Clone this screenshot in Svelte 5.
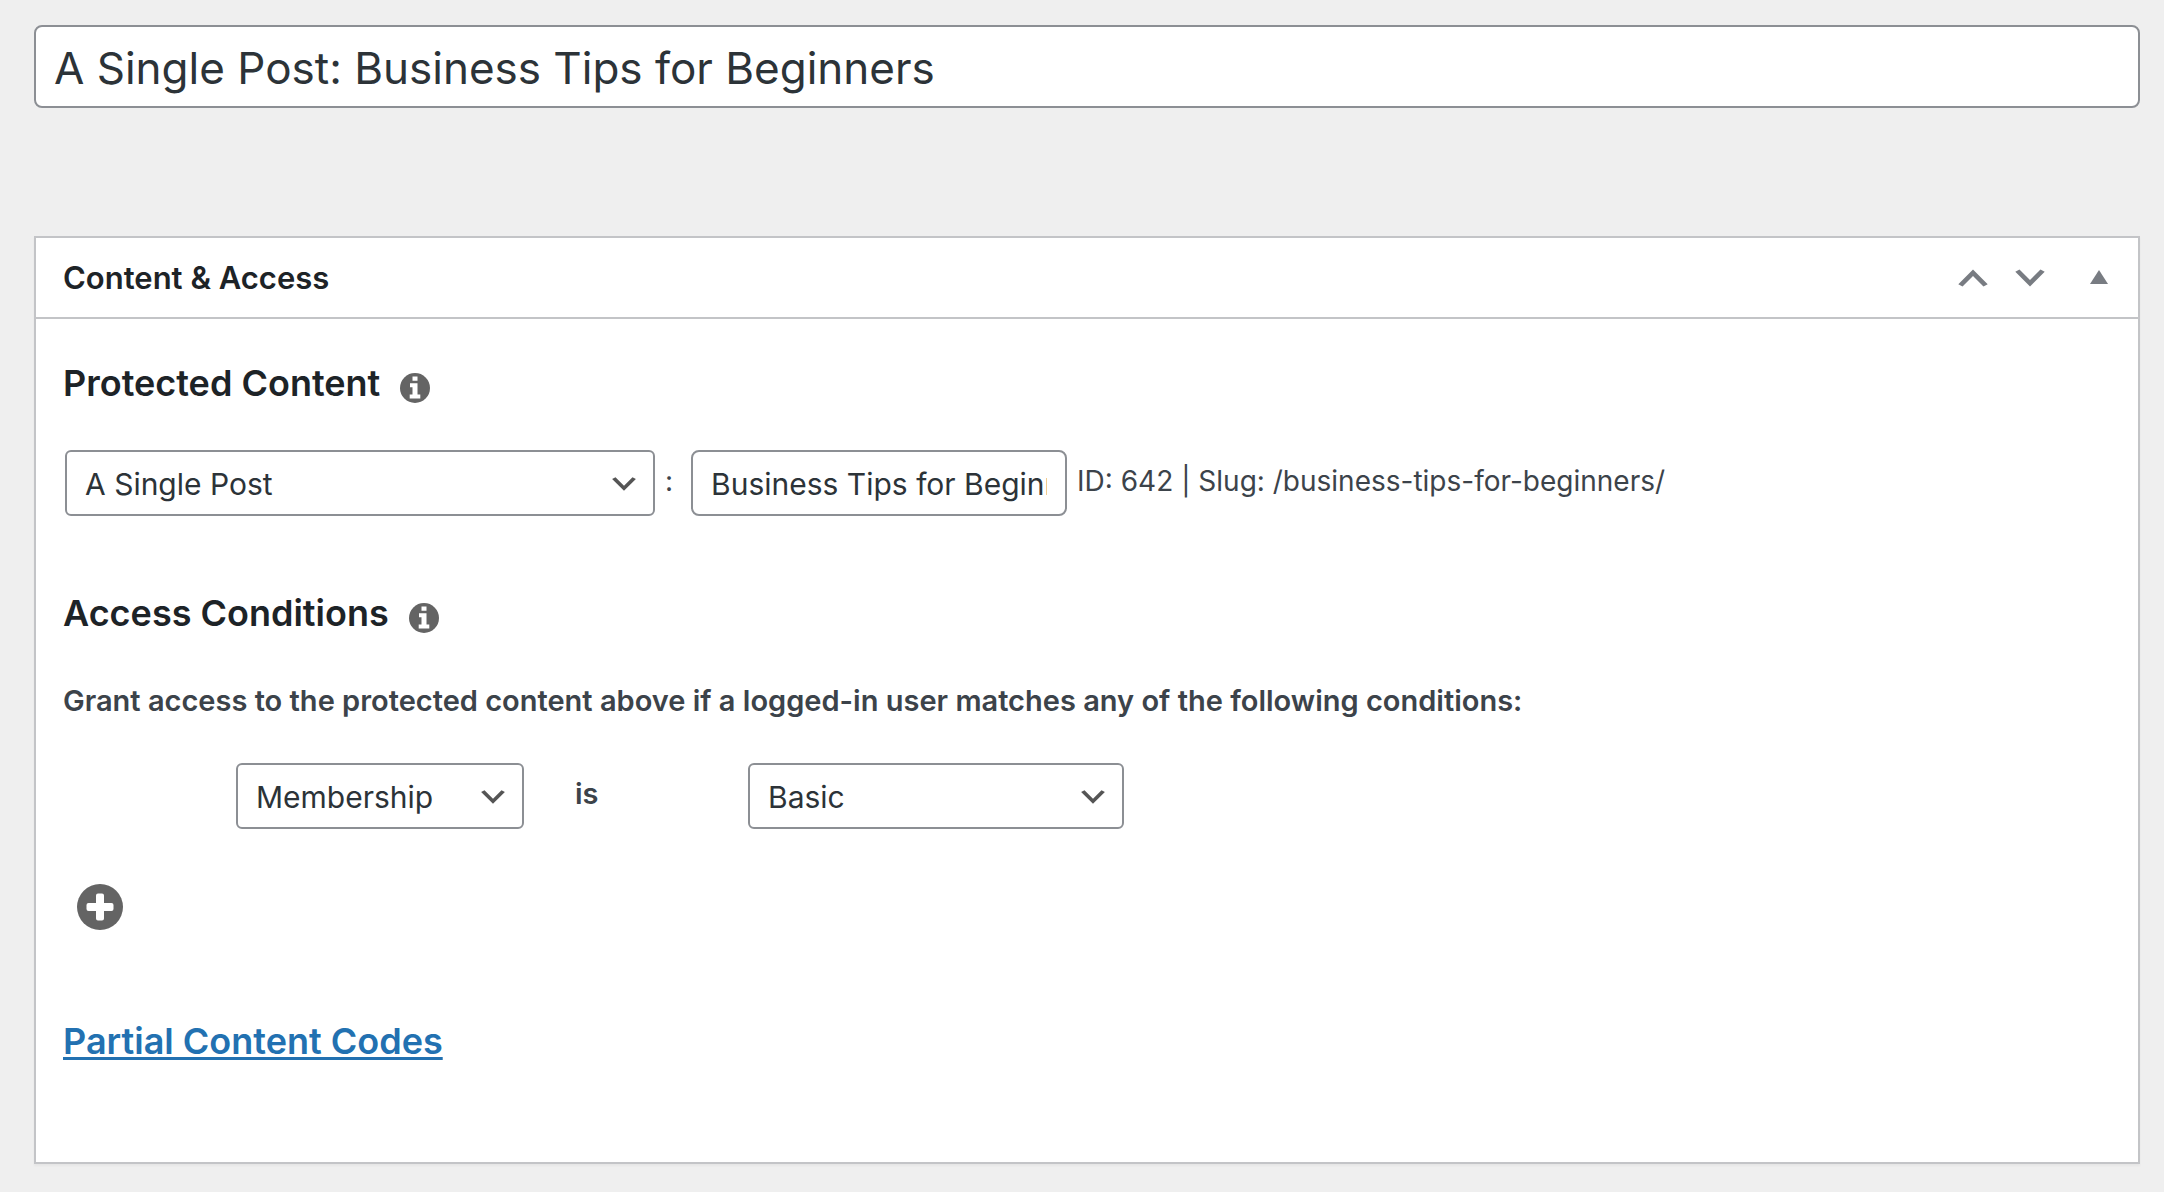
<script>
  let title = $state('A Single Post: Business Tips for Beginners');
  let scope = $state('A Single Post');
  let post = $state('Business Tips for Beginners');
  let conditionType = $state('Membership');
  let membership = $state('Basic');
</script>

{#snippet infoIcon()}
  <svg class="info-icon" viewBox="0 0 30 30" aria-hidden="true">
    <circle cx="15" cy="15" r="15" fill="#646464" />
    <path d="M12.500 3.500h5v4.200h-5zM10 10.200h7.500v11.300h2.800V25.500H9.700v-4h2.800v-7.300H10z" fill="#fff" />
  </svg>
{/snippet}

{#snippet dropdown(label, value, options, onchange)}
  <span class="dropdown">
    <select aria-label={label} {value} onchange={(e) => onchange(e.currentTarget.value)}>
      {#each options as option}
        <option value={option}>{option}</option>
      {/each}
    </select>
    <svg class="caret" viewBox="0 0 20 20" aria-hidden="true">
      <path d="M5 6l5 5 5-5 2 1-7 7-7-7 2-1z" fill="#555" />
    </svg>
  </span>
{/snippet}

<main class="page">
  <input class="title" type="text" aria-label="Title" bind:value={title} />

  <section class="box">
    <header class="box-header">
      <h2>Content &amp; Access</h2>
      <div class="actions">
        <button type="button" aria-label="Move up">
          <svg class="arrow" viewBox="0 0 20 20"><path d="M5 14l5-5 5 5 2-1-7-7-7 7 2 1z" /></svg>
        </button>
        <button type="button" aria-label="Move down">
          <svg class="arrow" viewBox="0 0 20 20"><path d="M5 6l5 5 5-5 2 1-7 7-7-7 2-1z" /></svg>
        </button>
        <button type="button" class="toggle" aria-label="Toggle panel">
          <svg class="triangle" viewBox="0 0 18 14"><path d="M9 0l9 14H0z" /></svg>
        </button>
      </div>
    </header>

    <div class="box-body">
      <h3>Protected Content {@render infoIcon()}</h3>
      <div class="content-row">
        <div class="scope">
          {@render dropdown('Content type', scope, ['A Single Post', 'A Single Page'], (v) => (scope = v))}
        </div>
        <span class="note separator">:</span>
        <input class="post" type="text" aria-label="Post" bind:value={post} />
        <span class="note">ID: 642 | Slug: /business-tips-for-beginners/</span>
      </div>

      <h3 class="conditions-heading">Access Conditions {@render infoIcon()}</h3>
      <p class="hint">
        Grant access to the protected content above if a logged-in user matches any of the following conditions:
      </p>
      <div class="condition-row">
        <div class="kind">
          {@render dropdown('Condition', conditionType, ['Membership', 'Member'], (v) => (conditionType = v))}
        </div>
        <span class="operator">is</span>
        <div class="level">
          {@render dropdown('Membership level', membership, ['Basic', 'Premium'], (v) => (membership = v))}
        </div>
      </div>

      <button type="button" class="add" aria-label="Add condition">
        <svg viewBox="0 0 46 46">
          <circle cx="23" cy="23" r="23" fill="#646464" />
          <path
            d="M21 9.500h4a2 2 0 0 1 2 2V19h7.500a2 2 0 0 1 2 2v4a2 2 0 0 1-2 2H27v7.500a2 2 0 0 1-2 2h-4a2 2 0 0 1-2-2V27h-7.500a2 2 0 0 1-2-2v-4a2 2 0 0 1 2-2H19v-7.500a2 2 0 0 1 2-2z"
            fill="#fff"
          />
        </svg>
      </button>

      <a class="codes" href="#codes">Partial Content Codes</a>
    </div>
  </section>
</main>

<style>
  :global(body) {
    margin: 0;
    background: #efefef;
    font-family: Inter, 'Liberation Sans', sans-serif;
    color: #3c434a;
  }

  .page {
    padding: 25px 24px 28px 34px;
  }

  input,
  select {
    box-sizing: border-box;
    width: 100%;
    height: 66px;
    margin: 0;
    border: 2px solid #8c8f94;
    border-radius: 8px;
    background: #fff;
    color: #2c3338;
    font-family: inherit;
    font-size: 30px;
    padding: 2px 18px 0;
  }

  .title {
    display: block;
    height: 83px;
    font-size: 44px;
  }

  .box {
    margin-top: 128px;
    border: 2px solid #c3c4c7;
    background: #fff;
    box-shadow: 0 2px 2px rgba(0, 0, 0, 0.04);
  }

  .box-header {
    display: flex;
    align-items: center;
    justify-content: space-between;
    height: 79px;
    padding: 0 12px 0 27px;
    border-bottom: 2px solid #c3c4c7;
  }

  h2,
  h3,
  p {
    margin: 0;
  }

  h2 {
    font-size: 31px;
    font-weight: 600;
    line-height: 40px;
    color: #1d2327;
  }

  .actions {
    display: flex;
    align-items: center;
  }

  button {
    display: grid;
    place-items: center;
    padding: 0;
    border: 0;
    background: none;
    color: #787c82;
    cursor: pointer;
  }

  .actions button {
    width: 57px;
    height: 60px;
  }

  .actions .toggle {
    width: 54px;
    height: 58px;
    margin-left: 14px;
    padding-bottom: 2px;
  }

  .actions svg {
    display: block;
    fill: currentColor;
  }

  .arrow {
    width: 42px;
    height: 42px;
  }

  .triangle {
    width: 18px;
    height: 14px;
  }

  .box-body {
    padding: 42px 27px 99px;
  }

  h3 {
    display: flex;
    align-items: center;
    gap: 20px;
    font-size: 36px;
    font-weight: 600;
    line-height: 44px;
    color: #1d2327;
  }

  .info-icon {
    width: 30px;
    height: 30px;
    margin-top: 10px;
  }

  .content-row,
  .condition-row {
    display: flex;
    align-items: center;
  }

  .content-row {
    gap: 10px;
    margin-top: 45px;
    padding-left: 2px;
  }

  .scope {
    width: 590px;
  }

  .post {
    width: 376px;
  }

  .note {
    padding-bottom: 4px;
    font-size: 28px;
    line-height: 40px;
  }

  .separator {
    margin-right: 8px;
  }

  .dropdown {
    display: grid;
    align-items: center;
  }

  .dropdown > select,
  .dropdown > .caret {
    grid-area: 1 / 1;
  }

  select {
    appearance: none;
    padding-right: 52px;
    border-radius: 6px;
  }

  .caret {
    justify-self: end;
    width: 34px;
    height: 34px;
    margin: 2px 14px 0 0;
    pointer-events: none;
  }

  .conditions-heading {
    margin-top: 75px;
  }

  .hint {
    margin-top: 46px;
    font-size: 29px;
    font-weight: 600;
    line-height: 40px;
  }

  .condition-row {
    margin-top: 42px;
    padding-left: 173px;
  }

  .kind {
    width: 288px;
  }

  .operator {
    width: 173px;
    padding: 0 0 4px 51px;
    font-size: 29px;
    font-weight: 600;
    line-height: 40px;
  }

  .level {
    width: 376px;
  }

  .add {
    margin: 55px 0 89px 14px;
    border-radius: 50%;
  }

  .add svg {
    display: block;
    width: 46px;
    height: 46px;
  }

  .codes {
    display: block;
    width: fit-content;
    font-size: 36px;
    font-weight: 600;
    line-height: 44px;
    color: #2271b1;
    text-decoration-thickness: 3px;
    text-underline-offset: 3px;
    text-decoration-skip-ink: none;
  }
</style>
